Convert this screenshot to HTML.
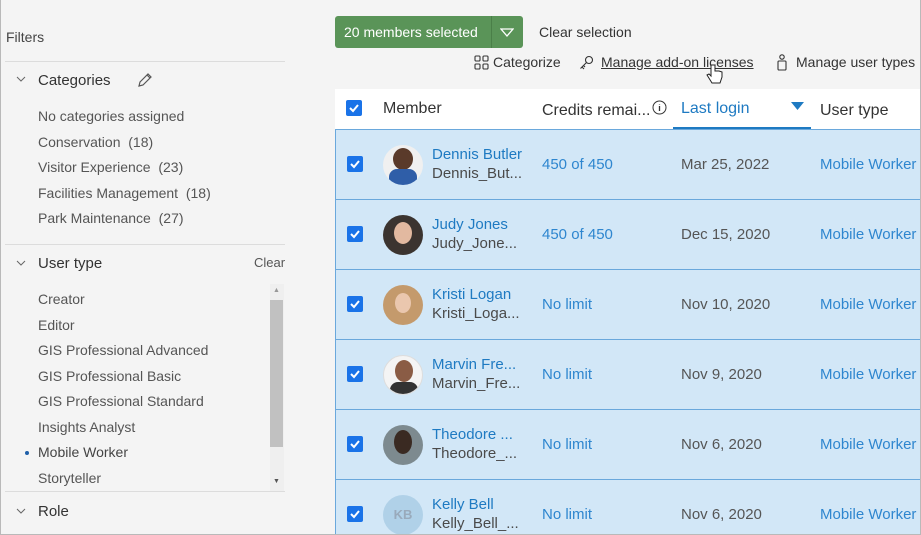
<!DOCTYPE html>
<html><head><style>
*{margin:0;padding:0;box-sizing:border-box}
html,body{width:921px;height:535px;overflow:hidden}
body{background:#f4f4f4;font-family:"Liberation Sans",sans-serif;color:#4a4a4a;position:relative}
.frame{position:absolute;left:0;top:0;width:921px;height:535px;border:1px solid #b9b9b9;border-top:none;pointer-events:none;z-index:10}
.a{position:absolute;white-space:nowrap}
.sep{position:absolute;left:5px;width:280px;height:1px;background:#dcdcdc}
.it{position:absolute;left:38px;font-size:14px;color:#555}
.hd{position:absolute;left:38px;font-size:15px;color:#333}
.chev{position:absolute;left:16px}
.row{position:absolute;left:335px;width:586px;height:71px;background:#d2e7f7;border:1px solid #6aa8dc;border-right:none;overflow:hidden}
.cb{position:absolute;left:11px;top:26px;width:16px;height:16px;background:#1a73e8;border-radius:2px}
.cb svg{position:absolute;left:2px;top:2px}
.av{position:absolute;left:47px;top:15px;width:40px;height:40px;border-radius:50%;background:#8b8f95;overflow:hidden}
.nm{position:absolute;left:96px;top:16px;font-size:15px;color:#1e7ac2}
.un{position:absolute;left:96px;top:35px;font-size:15px;color:#4a4a4a}
.cr{position:absolute;left:206px;top:26px;font-size:15px;color:#2e86cf}
.dt{position:absolute;left:345px;top:26px;font-size:15px;color:#555}
.ut{position:absolute;left:484px;top:26px;font-size:15px;color:#2e86cf}
</style></head><body>
<div class="a" style="left:6px;top:29px;font-size:14px;color:#444">Filters</div>
<div class="sep" style="top:61px"></div>
<svg class="chev" style="top:76px" width="10" height="6"><path d="M1 1l4 4 4-4" fill="none" stroke="#666"/></svg>
<div class="hd" style="top:72px">Categories</div>
<svg class="a" style="left:137px;top:72px" width="16" height="16" viewBox="0 0 16 16"><path d="M2 14l1-4 8-8 3 3-8 8z M10 3l3 3" fill="none" stroke="#555" stroke-width="1.2"/></svg>
<div class="it" style="top:108px">No categories assigned</div>
<div class="it" style="top:134px">Conservation&nbsp; (18)</div>
<div class="it" style="top:159px">Visitor Experience&nbsp; (23)</div>
<div class="it" style="top:185px">Facilities Management&nbsp; (18)</div>
<div class="it" style="top:210px">Park Maintenance&nbsp; (27)</div>
<div class="sep" style="top:244px"></div>
<svg class="chev" style="top:260px" width="10" height="6"><path d="M1 1l4 4 4-4" fill="none" stroke="#666"/></svg>
<div class="hd" style="top:255px">User type</div>
<div class="a" style="left:254px;top:255px;font-size:13px;color:#555">Clear</div>
<div class="it" style="top:291px">Creator</div>
<div class="it" style="top:317px">Editor</div>
<div class="it" style="top:342px">GIS Professional Advanced</div>
<div class="it" style="top:368px">GIS Professional Basic</div>
<div class="it" style="top:393px">GIS Professional Standard</div>
<div class="it" style="top:419px">Insights Analyst</div>
<div class="a" style="left:25px;top:451px;width:4px;height:4px;border-radius:50%;background:#1e5fa8"></div>
<div class="it" style="top:444px;color:#444">Mobile Worker</div>
<div class="it" style="top:470px">Storyteller</div>
<div class="a" style="left:270px;top:284px;width:14px;height:207px;background:#efefef"></div>
<div class="a" style="left:270px;top:300px;width:13px;height:147px;background:#c1c1c1"></div>
<div class="a" style="left:273px;top:287px;font-size:7px;color:#999">&#9650;</div>
<div class="a" style="left:273px;top:478px;font-size:7px;color:#555">&#9660;</div>
<div class="sep" style="top:491px"></div>
<svg class="chev" style="top:508px" width="10" height="6"><path d="M1 1l4 4 4-4" fill="none" stroke="#666"/></svg>
<div class="hd" style="top:503px">Role</div>

<div class="a" style="left:335px;top:16px;width:188px;height:32px;background:#5a9458;border-radius:3px"></div>
<div class="a" style="left:344px;top:24px;font-size:14px;color:#fff">20 members selected</div>
<div class="a" style="left:491px;top:16px;width:1px;height:32px;background:#4a7f48"></div>
<svg class="a" style="left:500px;top:28px" width="14" height="9"><path d="M1 1h12L7 8z" fill="none" stroke="#fff" stroke-width="1.3"/></svg>
<div class="a" style="left:539px;top:24px;font-size:14px;color:#333">Clear selection</div>
<svg class="a" style="left:474px;top:55px" width="15" height="15" viewBox="0 0 15 15"><g fill="none" stroke="#333" stroke-width="1.1"><rect x="1" y="1" width="5" height="5" rx="1"/><rect x="9" y="1" width="5" height="5" rx="1"/><rect x="1" y="9" width="5" height="5" rx="1"/><rect x="9" y="9" width="5" height="5" rx="1"/></g></svg>
<div class="a" style="left:493px;top:54px;font-size:14px;color:#333">Categorize</div>
<svg class="a" style="left:579px;top:55px" width="15" height="15" viewBox="0 0 15 15"><g fill="none" stroke="#333" stroke-width="1.1"><circle cx="10" cy="5" r="3.5"/><path d="M7.5 7.5L1.5 13.5M3 12l2 2M4.5 10.5l1.5 1.5"/></g></svg>
<div class="a" style="left:601px;top:54px;font-size:14px;color:#333;text-decoration:underline">Manage add-on licenses</div>
<svg class="a" style="left:706px;top:63px" width="18" height="22" viewBox="0 0 18 22"><path d="M5 2v11l-2-2-2 1 5 8h8l2-6v-5l-3-1-2 0-2 0V2z" fill="#fff" stroke="#222" stroke-width="1"/></svg>
<svg class="a" style="left:776px;top:54px" width="12" height="17" viewBox="0 0 12 17"><g fill="none" stroke="#333" stroke-width="1.1"><circle cx="6" cy="3" r="2.2"/><rect x="2" y="7" width="8" height="9" rx="1"/></g></svg>
<div class="a" style="left:796px;top:54px;font-size:14px;color:#333">Manage user types</div>

<div class="a" style="left:335px;top:89px;width:586px;height:40px;background:#fff"></div>
<div class="a" style="left:346px;top:100px;width:16px;height:16px;background:#1a73e8;border-radius:2px"><svg style="position:absolute;left:2px;top:2px" width="12" height="12"><path d="M2 6l3 3 5-6" fill="none" stroke="#fff" stroke-width="2"/></svg></div>
<div class="a" style="left:383px;top:100px;font-size:16px;color:#333">Member</div>
<div class="a" style="left:542px;top:102px;font-size:16px;color:#333">Credits remai...</div>
<svg class="a" style="left:652px;top:100px" width="15" height="15"><circle cx="7.5" cy="7.5" r="6.5" fill="none" stroke="#333"/><path d="M7.5 6v5M7.5 4v.5" stroke="#333" stroke-width="1.3"/></svg>
<div class="a" style="left:681px;top:100px;font-size:16px;color:#1e7ac2">Last login</div>
<svg class="a" style="left:791px;top:102px" width="13" height="9"><path d="M0 0h13L6.5 8z" fill="#1e7ac2"/></svg>
<div class="a" style="left:673px;top:127px;width:138px;height:3px;background:#1e7ac2"></div>
<div class="a" style="left:820px;top:102px;font-size:16px;color:#333">User type</div>

<div class="row" style="top:129px"><div class="cb"><svg width="12" height="12"><path d="M2 6l3 3 5-6" fill="none" stroke="#fff" stroke-width="2"/></svg></div><div class="av" style="background:#f0f0f0"><div style="position:absolute;left:10px;top:3px;width:20px;height:22px;border-radius:50%;background:#5a3a2a"></div><div style="position:absolute;left:6px;top:24px;width:28px;height:16px;background:#2f5ea8;border-radius:8px 8px 0 0"></div></div><div class="nm">Dennis Butler</div><div class="un">Dennis_But...</div><div class="cr">450 of 450</div><div class="dt">Mar 25, 2022</div><div class="ut">Mobile Worker</div></div>
<div class="row" style="top:199px"><div class="cb"><svg width="12" height="12"><path d="M2 6l3 3 5-6" fill="none" stroke="#fff" stroke-width="2"/></svg></div><div class="av" style="background:#3b3430"><div style="position:absolute;left:11px;top:7px;width:18px;height:22px;border-radius:50%;background:#e2b9a0"></div></div><div class="nm">Judy Jones</div><div class="un">Judy_Jone...</div><div class="cr">450 of 450</div><div class="dt">Dec 15, 2020</div><div class="ut">Mobile Worker</div></div>
<div class="row" style="top:269px"><div class="cb"><svg width="12" height="12"><path d="M2 6l3 3 5-6" fill="none" stroke="#fff" stroke-width="2"/></svg></div><div class="av" style="background:#c49a6c"><div style="position:absolute;left:12px;top:8px;width:16px;height:20px;border-radius:50%;background:#eac7ae"></div></div><div class="nm">Kristi Logan</div><div class="un">Kristi_Loga...</div><div class="cr">No limit</div><div class="dt">Nov 10, 2020</div><div class="ut">Mobile Worker</div></div>
<div class="row" style="top:339px"><div class="cb"><svg width="12" height="12"><path d="M2 6l3 3 5-6" fill="none" stroke="#fff" stroke-width="2"/></svg></div><div class="av" style="background:#f4f4f4;border:1px solid #ddd"><div style="position:absolute;left:11px;top:4px;width:18px;height:22px;border-radius:50%;background:#8a5c45"></div><div style="position:absolute;left:6px;top:26px;width:28px;height:14px;background:#333;border-radius:8px 8px 0 0"></div></div><div class="nm">Marvin Fre...</div><div class="un">Marvin_Fre...</div><div class="cr">No limit</div><div class="dt">Nov 9, 2020</div><div class="ut">Mobile Worker</div></div>
<div class="row" style="top:409px"><div class="cb"><svg width="12" height="12"><path d="M2 6l3 3 5-6" fill="none" stroke="#fff" stroke-width="2"/></svg></div><div class="av" style="background:#7d8a8f"><div style="position:absolute;left:11px;top:5px;width:18px;height:24px;border-radius:50%;background:#3a2a22"></div></div><div class="nm">Theodore ...</div><div class="un">Theodore_...</div><div class="cr">No limit</div><div class="dt">Nov 6, 2020</div><div class="ut">Mobile Worker</div></div>
<div class="row" style="top:479px;height:56px;border-bottom:none"><div class="cb"><svg width="12" height="12"><path d="M2 6l3 3 5-6" fill="none" stroke="#fff" stroke-width="2"/></svg></div><div class="av" style="background:#b0d1e8;color:#9ab;font-size:13px;font-weight:bold;text-align:center;line-height:40px">KB</div><div class="nm">Kelly Bell</div><div class="un">Kelly_Bell_...</div><div class="cr">No limit</div><div class="dt">Nov 6, 2020</div><div class="ut">Mobile Worker</div></div>
<div class="frame"></div>
</body></html>
